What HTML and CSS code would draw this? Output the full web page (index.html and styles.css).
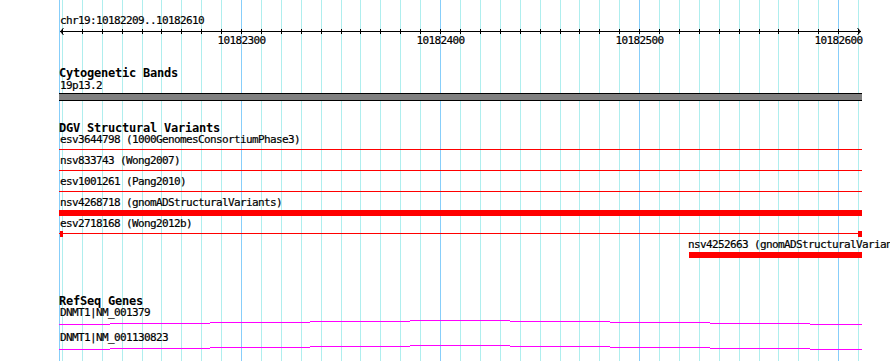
FILE: index.html
```html
<!DOCTYPE html>
<html>
<head>
<meta charset="utf-8">
<link rel="stylesheet" href="styles.css">
</head>
<body>
<div class="panel">
  <svg class="grid" width="890" height="361" shape-rendering="crispEdges">
    <rect class="major" x="59" y="0" width="1" height="361"/>
    <rect x="62" y="0" width="1" height="361"/><rect x="82" y="0" width="1" height="361"/><rect x="102" y="0" width="1" height="361"/><rect x="122" y="0" width="1" height="361"/><rect x="142" y="0" width="1" height="361"/><rect x="161" y="0" width="1" height="361"/><rect x="181" y="0" width="1" height="361"/><rect x="201" y="0" width="1" height="361"/><rect x="221" y="0" width="1" height="361"/><rect class="major" x="241" y="0" width="1" height="361"/>
    <rect x="261" y="0" width="1" height="361"/><rect x="281" y="0" width="1" height="361"/><rect x="301" y="0" width="1" height="361"/><rect x="321" y="0" width="1" height="361"/><rect x="341" y="0" width="1" height="361"/><rect x="360" y="0" width="1" height="361"/><rect x="380" y="0" width="1" height="361"/><rect x="400" y="0" width="1" height="361"/><rect x="420" y="0" width="1" height="361"/><rect class="major" x="440" y="0" width="1" height="361"/>
    <rect x="460" y="0" width="1" height="361"/><rect x="480" y="0" width="1" height="361"/><rect x="500" y="0" width="1" height="361"/><rect x="520" y="0" width="1" height="361"/><rect x="540" y="0" width="1" height="361"/><rect x="560" y="0" width="1" height="361"/><rect x="579" y="0" width="1" height="361"/><rect x="599" y="0" width="1" height="361"/><rect x="619" y="0" width="1" height="361"/><rect class="major" x="639" y="0" width="1" height="361"/>
    <rect x="659" y="0" width="1" height="361"/><rect x="679" y="0" width="1" height="361"/><rect x="699" y="0" width="1" height="361"/><rect x="719" y="0" width="1" height="361"/><rect x="739" y="0" width="1" height="361"/><rect x="759" y="0" width="1" height="361"/><rect x="778" y="0" width="1" height="361"/><rect x="798" y="0" width="1" height="361"/><rect x="818" y="0" width="1" height="361"/><rect class="major" x="838" y="0" width="1" height="361"/>
    <rect x="858" y="0" width="1" height="361"/>
  </svg>

  <div class="ruler">
    <div class="chrom">chr19:10182209..10182610</div>
    <svg class="axis" width="890" height="20">
      <g shape-rendering="crispEdges" fill="#000">
        <rect x="60" y="4" width="801" height="1"/>
        <rect x="62" y="2" width="1" height="5"/><rect x="82" y="2" width="1" height="5"/><rect x="102" y="2" width="1" height="5"/><rect x="122" y="2" width="1" height="5"/><rect x="142" y="2" width="1" height="5"/><rect x="161" y="2" width="1" height="5"/><rect x="181" y="2" width="1" height="5"/><rect x="201" y="2" width="1" height="5"/><rect x="221" y="2" width="1" height="5"/><rect x="241" y="2" width="1" height="5"/>
        <rect x="261" y="2" width="1" height="5"/><rect x="281" y="2" width="1" height="5"/><rect x="301" y="2" width="1" height="5"/><rect x="321" y="2" width="1" height="5"/><rect x="341" y="2" width="1" height="5"/><rect x="360" y="2" width="1" height="5"/><rect x="380" y="2" width="1" height="5"/><rect x="400" y="2" width="1" height="5"/><rect x="420" y="2" width="1" height="5"/><rect x="440" y="2" width="1" height="5"/>
        <rect x="460" y="2" width="1" height="5"/><rect x="480" y="2" width="1" height="5"/><rect x="500" y="2" width="1" height="5"/><rect x="520" y="2" width="1" height="5"/><rect x="540" y="2" width="1" height="5"/><rect x="560" y="2" width="1" height="5"/><rect x="579" y="2" width="1" height="5"/><rect x="599" y="2" width="1" height="5"/><rect x="619" y="2" width="1" height="5"/><rect x="639" y="2" width="1" height="5"/>
        <rect x="659" y="2" width="1" height="5"/><rect x="679" y="2" width="1" height="5"/><rect x="699" y="2" width="1" height="5"/><rect x="719" y="2" width="1" height="5"/><rect x="739" y="2" width="1" height="5"/><rect x="759" y="2" width="1" height="5"/><rect x="778" y="2" width="1" height="5"/><rect x="798" y="2" width="1" height="5"/><rect x="818" y="2" width="1" height="5"/><rect x="838" y="2" width="1" height="5"/>
        <rect x="858" y="2" width="1" height="5"/>
      </g>
      <polyline points="63.5,1 60.5,4.5 63.5,8" fill="none" stroke="#000" stroke-width="1"/>
      <polyline points="857.5,1 860.5,4.5 857.5,8" fill="none" stroke="#000" stroke-width="1"/>
      <text class="axis-label" x="241.5" y="17" text-anchor="middle">10182300</text>
      <text class="axis-label" x="440.5" y="17" text-anchor="middle">10182400</text>
      <text class="axis-label" x="639.5" y="17" text-anchor="middle">10182500</text>
      <text class="axis-label" x="838.5" y="17" text-anchor="middle">10182600</text>
    </svg>
  </div>

  <section class="track cyto">
    <div class="track-title">Cytogenetic Bands</div>
    <div class="label band-label">19p13.2</div>
    <div class="band"></div>
  </section>

  <section class="track dgv">
    <div class="track-title">DGV Structural Variants</div>
    <div class="row">
      <div class="label">esv3644798 (1000GenomesConsortiumPhase3)</div>
      <div class="glyph line" style="margin-left:59px;width:803px"></div>
    </div>
    <div class="row">
      <div class="label">nsv833743 (Wong2007)</div>
      <div class="glyph line" style="margin-left:59px;width:803px"></div>
    </div>
    <div class="row">
      <div class="label">esv1001261 (Pang2010)</div>
      <div class="glyph line" style="margin-left:59px;width:803px"></div>
    </div>
    <div class="row">
      <div class="label">nsv4268718 (gnomADStructuralVariants)</div>
      <div class="glyph bar" style="margin-left:59px;width:803px"></div>
    </div>
    <div class="row">
      <div class="label">esv2718168 (Wong2012b)</div>
      <div class="glyph capped" style="margin-left:59px;width:803px">
        <span class="cap cap-left"></span>
        <span class="cap cap-right"></span>
      </div>
    </div>
    <div class="row">
      <div class="label" style="padding-left:688px">nsv4252663 (gnomADStructuralVariants)</div>
      <div class="glyph bar" style="margin-left:689px;width:173px"></div>
    </div>
  </section>

  <section class="track refseq">
    <div class="track-title">RefSeq Genes</div>
    <div class="gene">
      <div class="label">DNMT1|NM_001379</div>
      <svg class="gene-line" width="890" height="13" shape-rendering="crispEdges">
        <rect x="59" y="5" width="51" height="1"/>
        <rect x="110" y="4" width="100" height="1"/>
        <rect x="210" y="3" width="100" height="1"/>
        <rect x="310" y="2" width="100" height="1"/>
        <rect x="410" y="1" width="100" height="1"/>
        <rect x="510" y="2" width="100" height="1"/>
        <rect x="610" y="3" width="100" height="1"/>
        <rect x="710" y="4" width="100" height="1"/>
        <rect x="810" y="5" width="52" height="1"/>
      </svg>
    </div>
    <div class="gene">
      <div class="label">DNMT1|NM_001130823</div>
      <svg class="gene-line" width="890" height="13" shape-rendering="crispEdges">
        <rect x="59" y="5" width="51" height="1"/>
        <rect x="110" y="4" width="100" height="1"/>
        <rect x="210" y="3" width="100" height="1"/>
        <rect x="310" y="2" width="100" height="1"/>
        <rect x="410" y="1" width="100" height="1"/>
        <rect x="510" y="2" width="100" height="1"/>
        <rect x="610" y="3" width="100" height="1"/>
        <rect x="710" y="4" width="100" height="1"/>
        <rect x="810" y="5" width="52" height="1"/>
      </svg>
    </div>
  </section>
</div>
</body>
</html>
```

FILE: styles.css
```css
* { box-sizing: border-box; }

body {
  margin: 0;
  background: #ffffff;
}

.panel {
  position: relative;
  z-index: 0;
  width: 890px;
  height: 361px;
  overflow: hidden;
  background: #ffffff;
  color: #000000;
  font-family: "DejaVu Sans Mono", "Liberation Mono", monospace;
}

/* background grid layer, painted under all track content */
.grid {
  position: absolute;
  left: 0;
  top: 0;
  z-index: -1;
  fill: #afeeee;
}
.grid .major { fill: #87cefa; }

.ruler { padding-top: 15px; }

.chrom,
.label {
  font-size: 11px;
  line-height: 12px;
  letter-spacing: -0.62px;
  white-space: nowrap;
  padding-left: 60px;
  -webkit-text-stroke: 0.2px #000000;
}

.axis { display: block; }
.axis-label {
  font-family: "DejaVu Sans Mono", "Liberation Mono", monospace;
  font-size: 11px;
  letter-spacing: -0.62px;
  fill: #000000;
  stroke: #000000;
  stroke-width: 0.2px;
}

.track-title {
  font-weight: bold;
  font-size: 12px;
  line-height: 11px;
  letter-spacing: -0.22px;
  white-space: nowrap;
  padding-left: 59px;
}

.cyto { margin-top: 21px; }
.band-label { margin-top: 1px; }
.band {
  margin: 1px 0 0 59px;
  width: 803px;
  height: 8px;
  background: #808080;
  border-top: 1px solid #000000;
  border-bottom: 1px solid #000000;
}

.dgv { margin-top: 22px; }
.row { height: 21px; }

.glyph {
  margin-top: 1px;
  height: 6px;
}
.glyph.line {
  background: linear-gradient(#ff0000, #ff0000) 0 2px / 100% 1px no-repeat;
}
.glyph.bar { background: #ff0000; }
.glyph.capped {
  display: flex;
  justify-content: space-between;
  background: linear-gradient(#ff0000, #ff0000) 0 2px / 100% 1px no-repeat;
}
.cap {
  display: block;
  height: 6px;
  background: #ff0000;
}
.cap-left { width: 3px; margin-left: 1px; }
.cap-right { width: 4px; }

.refseq { margin-top: 36px; }
.gene { height: 25px; }
.gene-line {
  display: block;
  fill: #ff00ff;
}
```
